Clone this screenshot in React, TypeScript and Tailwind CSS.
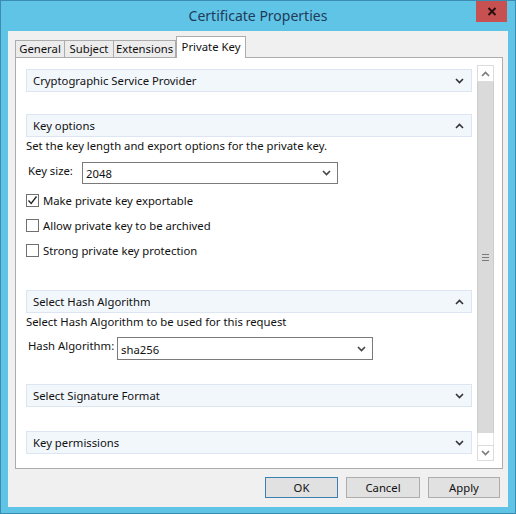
import React from "react";

const Chevron = ({ up = false, color = "#333", w = 9 }: { up?: boolean; color?: string; w?: number }) => (
  <svg width={w} height="6" viewBox="0 0 9 6" className="shrink-0">
    <path d={up ? "M1 5 L4.5 1.5 L8 5" : "M1 1 L4.5 4.5 L8 1"} fill="none" stroke={color} strokeWidth="1.6" />
  </svg>
);

const Header = ({ title, up = false, mt }: { title: string; up?: boolean; mt: string }) => (
  <div className={`${mt} h-[23px] shrink-0 flex items-center justify-between pl-[6px] pr-[7px] bg-[#f2f7fc] border border-[#dbe6f2] text-[#111]`}>
    <span>{title}</span>
    <Chevron up={up} />
  </div>
);

const Check = ({ checked = false, label }: { checked?: boolean; label: string }) => (
  <div className="h-[25px] flex items-center gap-[4px]">
    <div className="w-[13px] h-[13px] border border-[#707070] bg-white flex items-center justify-center">
      {checked && (
        <svg width="11" height="11" viewBox="0 0 11 11">
          <path d="M1.5 5.5 L4.2 8.5 L9.5 1.5" fill="none" stroke="#222" strokeWidth="1.3" />
        </svg>
      )}
    </div>
    <span>{label}</span>
  </div>
);

const Select = ({ value, width }: { value: string; width: string }) => (
  <div className={`${width} h-full border border-[#7a7a7a] bg-white flex items-center justify-between pl-[3px] pr-[6px]`}>
    <span className="pt-[2px]">{value}</span>
    <Chevron color="#444" />
  </div>
);

export default function App() {
  return (
    <div className="w-[516px] h-[514px] bg-[#60c4e7] border border-[#3a8cb3] flex flex-col relative font-['Noto_Sans',sans-serif] text-[11.3px] leading-[16px] text-[#111]">
      <div className="h-[30px] shrink-0 flex items-center justify-center text-[14px] text-[#1f3b58]">
        Certificate Properties
      </div>
      <div className="absolute top-0 right-[8px] w-[31px] h-[21px] bg-[#c75050] flex items-center justify-center">
        <svg width="10" height="9" viewBox="0 0 10 9">
          <path d="M1.5 1 L8.5 8 M8.5 1 L1.5 8" stroke="#2a0f0f" strokeWidth="2" />
        </svg>
      </div>

      <div className="mx-[7px] h-[476px] shrink-0 bg-[#f0f0f0] flex flex-col">
        {/* tabs */}
        <div className="ml-[7px] mt-[5px] h-[21px] flex items-end">
          <div className="w-[50px] h-[17px] border border-b-0 border-[#acacac] bg-[#ececec] flex items-center justify-center">General</div>
          <div className="w-[49px] h-[17px] border border-l-0 border-b-0 border-[#acacac] bg-[#ececec] flex items-center justify-center">Subject</div>
          <div className="w-[62px] h-[17px] border border-l-0 border-b-0 border-[#acacac] bg-[#ececec] flex items-center justify-center">Extensions</div>
          <div className="w-[70px] h-[22px] -mb-px relative z-10 border border-b-0 border-[#acacac] bg-white flex items-center justify-center pb-[2px]">Private Key</div>
        </div>

        {/* panel */}
        <div className="ml-[7px] w-[488px] h-[412px] shrink-0 border border-[#acacac] bg-white pl-[7px] pr-[8px] pt-[7px] pb-[7px]">
          <div className="h-full flex">
            <div className="flex-1 overflow-hidden pl-[3px] pr-[5px] flex flex-col">
              <Header title="Cryptographic Service Provider" mt="mt-[4px]" />
              <Header title="Key options" up mt="mt-[22px]" />
              <div className="mt-[1px] h-[16px]">Set the key length and export options for the private key.</div>
              <div className="mt-[8px] h-[22px] flex items-start">
                <span className="w-[56px] pl-[2px] pt-[1px]">Key size:</span>
                <Select value="2048" width="w-[256px]" />
              </div>
              <div className="mt-[4px] flex flex-col">
                <Check checked label="Make private key exportable" />
                <Check label="Allow private key to be archived" />
                <Check label="Strong private key protection" />
              </div>
              <Header title="Select Hash Algorithm" up mt="mt-[27px]" />
              <div className="mt-[1px] h-[16px]">Select Hash Algorithm to be used for this request</div>
              <div className="mt-[7px] h-[23px] flex items-start">
                <span className="w-[91px] pl-[2px] pt-[1px]">Hash Algorithm:</span>
                <Select value="sha256" width="w-[256px]" />
              </div>
              <Header title="Select Signature Format" mt="mt-[24px]" />
              <Header title="Key permissions" mt="mt-[24px]" />
            </div>

            {/* scrollbar */}
            <div className="w-[17px] flex flex-col">
              <div className="h-[17px] shrink-0 border border-[#dcdcdc] bg-white flex items-center justify-center">
                <Chevron up color="#7a7a7a" w={9} />
              </div>
              <div className="h-[351px] shrink-0 bg-[#dadada] border-x border-[#cdcdcd] flex items-center justify-center">
                <div className="flex flex-col gap-[2px]">
                  <div className="w-[7px] h-px bg-[#7a7a7a]" />
                  <div className="w-[7px] h-px bg-[#7a7a7a]" />
                  <div className="w-[7px] h-px bg-[#7a7a7a]" />
                </div>
              </div>
              <div className="h-[12px] shrink-0 bg-white border-x border-[#e6e6e6]" />
              <div className="h-[16px] shrink-0 border border-[#dcdcdc] bg-white flex items-center justify-center">
                <Chevron color="#7a7a7a" w={9} />
              </div>
            </div>
          </div>
        </div>

        {/* buttons */}
        <div className="mt-[8px] h-[21px] flex justify-end gap-[8px] pr-[8px]">
          <div className="w-[73px] h-full border border-[#3c7fb1] bg-[#e1e1e1] flex items-center justify-center">OK</div>
          <div className="w-[74px] h-full border border-[#adadad] bg-[#e1e1e1] flex items-center justify-center">Cancel</div>
          <div className="w-[72px] h-full border border-[#adadad] bg-[#e1e1e1] flex items-center justify-center">Apply</div>
        </div>
      </div>
    </div>
  );
}
